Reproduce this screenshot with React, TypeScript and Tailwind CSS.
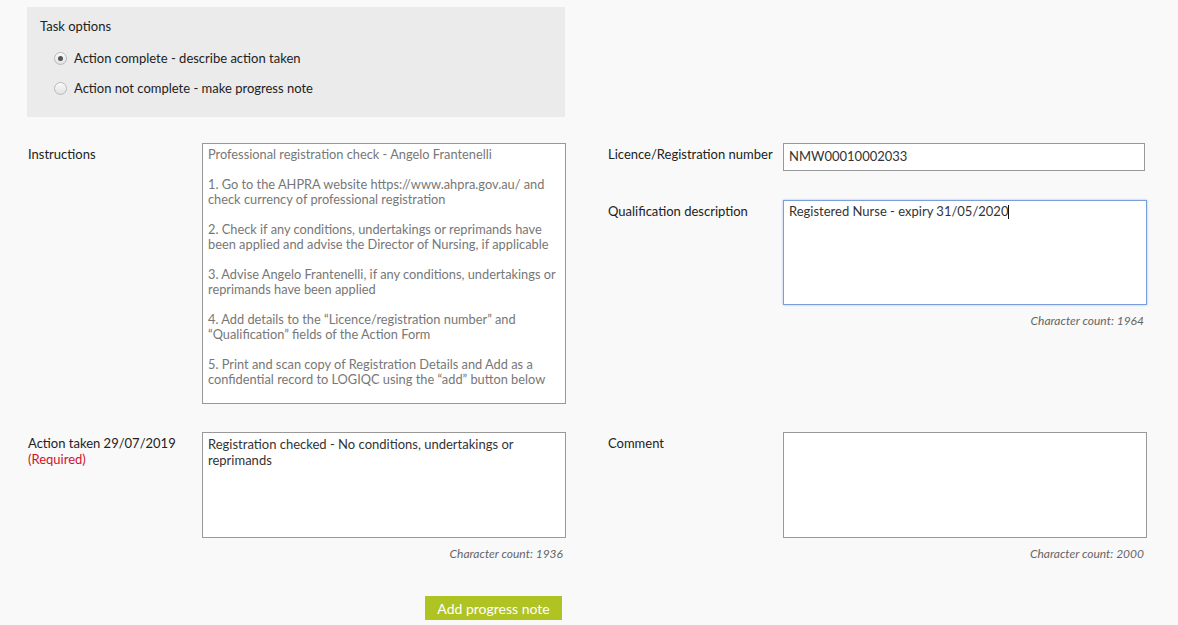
import { useState } from 'react';

const font = { fontFamily: 'Lato, "Liberation Sans", sans-serif' };

const instructions = [
  'Professional registration check - Angelo Frantenelli',
  '',
  '1. Go to the AHPRA website https://www.ahpra.gov.au/ and check currency of professional registration',
  '',
  '2. Check if any conditions, undertakings or reprimands have been applied and advise the Director of Nursing, if applicable',
  '',
  '3. Advise Angelo Frantenelli, if any conditions, undertakings or reprimands have been applied',
  '',
  '4. Add details to the \u201cLicence/registration number\u201d and \u201cQualification\u201d fields of the Action Form',
  '',
  '5. Print and scan copy of Registration Details and Add as a confidential record to LOGIQC using the \u201cadd\u201d button below',
].join('\n');

function Radio({ checked, label, onClick }: { checked: boolean; label: string; onClick: () => void }) {
  return (
    <button onClick={onClick} className="flex items-center gap-[7px] cursor-pointer text-[13px] text-[#222]">
      <span className="w-[13px] h-[13px] rounded-full border border-[#b9b9b9] bg-gradient-to-b from-[#fafafa] to-[#e2e2e2] flex items-center justify-center">
        {checked && <span className="w-[5px] h-[5px] rounded-full bg-[#555]" />}
      </span>
      {label}
    </button>
  );
}

function CharCount({ n }: { n: number }) {
  return <div className="text-right text-[12px] italic text-[#666] pr-[3px] mt-[7px]">Character count: {n}</div>;
}

export default function App() {
  const [complete, setComplete] = useState(true);

  return (
    <div style={font} className="min-h-[625px] bg-[#f9f9f9] pt-[7px] pl-[27px]">
      <div className="w-[538px] h-[110px] bg-[#ebebeb] pl-[13px] pt-[11px]">
        <div className="text-[13px] text-[#222] leading-[16px]">Task options</div>
        <div className="flex flex-col items-start gap-[10px] mt-[15px] pl-[14px]">
          <Radio checked={complete} label="Action complete - describe action taken" onClick={() => setComplete(true)} />
          <Radio checked={!complete} label="Action not complete - make progress note" onClick={() => setComplete(false)} />
        </div>
      </div>

      <div className="flex gap-[42px] mt-[26px] pl-[1px]">
        <div className="flex w-[538px]">
          <div className="w-[174px] text-[13px] text-[#222] pt-[3px] leading-[16px]">Instructions</div>
          <div className="w-[364px] h-[261px] border border-[#999] bg-white px-[5px] pt-[3px] text-[12.8px] leading-[15px] text-[#777] whitespace-pre-line">
            {instructions}
          </div>
        </div>
        <div className="w-[539px]">
          <div className="flex">
            <div className="w-[175px] text-[13px] text-[#222] pt-[3px] leading-[16px]">Licence/Registration number</div>
            <div className="w-[362px] h-[28px] border border-[#999] bg-white px-[5px] flex items-center text-[13px] text-[#333]">
              NMW00010002033
            </div>
          </div>
          <div className="flex mt-[29px]">
            <div className="w-[175px] text-[13px] text-[#222] pt-[3px] leading-[16px]">Qualification description</div>
            <div className="w-[364px]">
              <div className="h-[105px] border border-[#7b9fdd] shadow-[0_0_2px_#9dbbf0] bg-white px-[5px] pt-[3px] text-[13px] leading-[15px] text-[#333]">
                Registered Nurse - expiry 31/05/2020<span className="inline-block w-px h-[14px] bg-[#111] align-[-3px]" />
              </div>
              <CharCount n={1964} />
            </div>
          </div>
        </div>
      </div>

      <div className="flex gap-[42px] mt-[28px] pl-[1px]">
        <div className="flex w-[538px]">
          <div className="w-[174px] text-[13px] leading-[16px] pt-[3px]">
            <div className="text-[#222]">Action taken 29/07/2019</div>
            <div className="text-[#d0112b]">(Required)</div>
          </div>
          <div className="w-[364px]">
            <div className="h-[106px] border border-[#999] bg-white px-[5px] pt-[3px] text-[13px] leading-[16px] text-[#333]">
              Registration checked - No conditions, undertakings or reprimands
            </div>
            <CharCount n={1936} />
          </div>
        </div>
        <div className="flex w-[539px]">
          <div className="w-[175px] text-[13px] text-[#222] pt-[3px] leading-[16px]">Comment</div>
          <div className="w-[364px]">
            <div className="h-[106px] border border-[#999] bg-white" />
            <CharCount n={2000} />
          </div>
        </div>
      </div>

      <div className="w-[538px] flex justify-end mt-[33px] pr-[3px]">
        <button className="h-[24px] w-[137px] bg-[#afc323] text-white text-[14px] cursor-pointer">Add progress note</button>
      </div>
    </div>
  );
}
